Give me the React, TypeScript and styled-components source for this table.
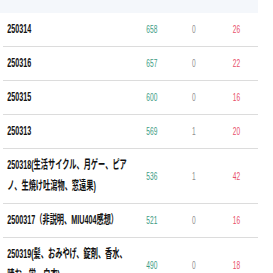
import React from 'react';
import styled, { createGlobalStyle } from 'styled-components';

const GlobalStyle = createGlobalStyle`
  html, body {
    margin: 0;
    padding: 0;
    background: #ffffff;
    overflow: hidden;
  }
  body {
    font-family: "Liberation Sans", "Noto Sans CJK JP", sans-serif;
  }
`;

// the whole table is drawn condensed, as in the reference
const Squeeze = styled.div`
  width: 430px;
  transform: scaleX(0.6);
  transform-origin: left top;
`;

const HeaderBand = styled.div`
  height: 13px;
  background: #f4f7fb;
`;

const Row = styled.div`
  display: grid;
  grid-template-columns: 213px 70px 70px 72px;
  align-items: center;
  margin-left: 5px;
  padding: 6px 0;
  border-bottom: 1px solid #dcdcdc;
`;

const Label = styled.div`
  padding-left: 7px;
  max-width: 204px;
  font-size: 12px;
  line-height: 21px;
  font-weight: 700;
  color: #111;
`;

const Num = styled.div<{ $tone: 'good' | 'mid' | 'bad' }>`
  text-align: center;
  font-size: 11px;
  line-height: 21px;
  color: ${({ $tone }) =>
    $tone === 'good' ? '#3c9c84' : $tone === 'bad' ? '#e8506b' : '#8f8f8f'};
`;

const rows = [
  { label: '250314', a: 658, b: 0, c: 26 },
  { label: '250316', a: 657, b: 0, c: 22 },
  { label: '250315', a: 600, b: 0, c: 16 },
  { label: '250313', a: 569, b: 1, c: 20 },
  { label: '250318(生活サイクル、月ゲー、ピアノ、生焼け吐瀉物、窓遠果)', a: 536, b: 1, c: 42 },
  { label: '2500317（非説明、MIU404感想）', a: 521, b: 0, c: 16 },
  { label: '250319(髪、おみやげ、錠剤、香水、晴お、蛍、白衣)', a: 490, b: 0, c: 18 },
];

export default function App() {
  return (
    <>
      <GlobalStyle />
      <Squeeze>
        <HeaderBand />
        {rows.map(r => (
          <Row key={r.label}>
            <Label>{r.label}</Label>
            <Num $tone="good">{r.a}</Num>
            <Num $tone="mid">{r.b}</Num>
            <Num $tone="bad">{r.c}</Num>
          </Row>
        ))}
      </Squeeze>
    </>
  );
}
